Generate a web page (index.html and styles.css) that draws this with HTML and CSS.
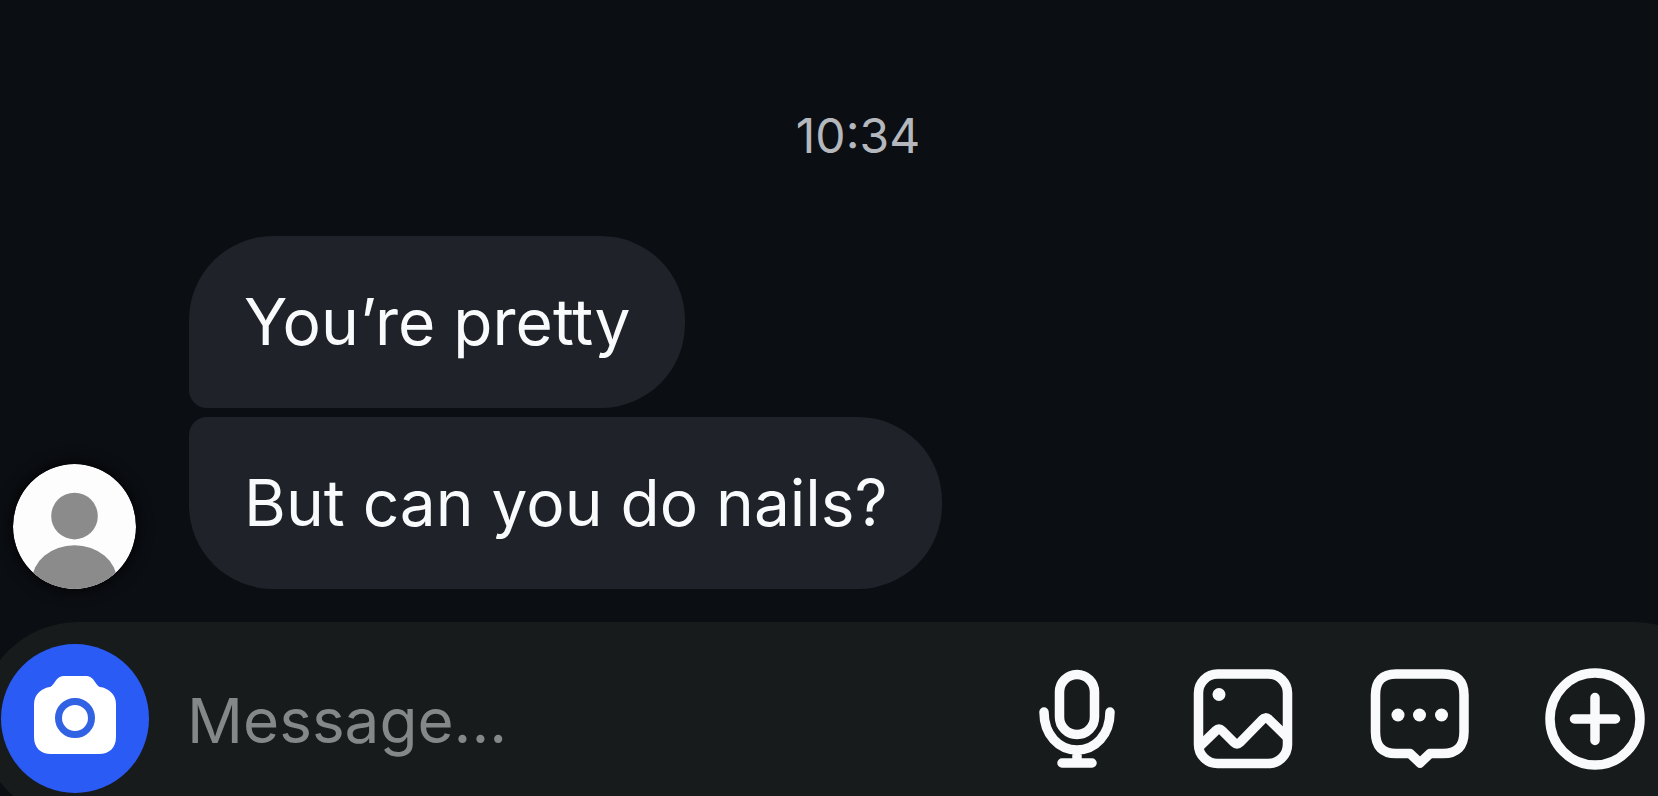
FILE: index.html
```html
<!DOCTYPE html>
<html lang="en">

<head>
    <meta charset="UTF-8">
    <meta name="viewport" content="width=device-width, initial-scale=1.0">
    <title>Chat</title>
    <link rel="stylesheet" href="styles.css">
</head>

<body>
    <main class="chat">
        <time class="time">10:34</time>

        <section class="thread">
            <svg class="avatar" viewBox="0 0 124 126" role="img" aria-label="Profile picture">
                <clipPath id="round">
                    <ellipse cx="62" cy="63" rx="62" ry="63" />
                </clipPath>
                <g clip-path="url(#round)">
                    <rect width="124" height="126" fill="#fdfdfd" />
                    <circle cx="62" cy="52.5" r="23.5" fill="#8b8b8b" />
                    <ellipse cx="62" cy="118" rx="43" ry="36" fill="#8b8b8b" />
                </g>
            </svg>
            <div class="messages">
                <p class="bubble first">You’re pretty</p>
                <p class="bubble last">But can you do nails?</p>
            </div>
        </section>

        <form class="composer">
            <button type="button" class="camera" aria-label="Camera">
                <svg width="82" height="86" viewBox="0 0 82 86">
                    <path d="M31 0H51C61 0 60 8 66 11C74 12 82 18 82 28V61C82 72 75 78 65 78H17C7 78 0 72 0 61V28C0 18 8 12 16 11C22 8 21 0 31 0Z" fill="#fff" />
                    <circle cx="41" cy="42" r="16.5" fill="none" stroke="#3262e4" stroke-width="7" />
                </svg>
            </button>
            <input type="text" class="field" placeholder="Message..." aria-label="Message">
            <div class="actions">
                <button type="button" aria-label="Voice message">
                    <svg width="80" height="102" viewBox="0 0 80 102">
                        <rect x="22.5" y="6.5" width="35" height="60" rx="17.5" />
                        <path d="M7 44C7 67 22 82 40 82S73 67 73 44M40 82V95M25 95H55" />
                    </svg>
                </button>
                <button type="button" aria-label="Photo">
                    <svg width="100" height="102" viewBox="0 0 100 102">
                        <rect x="5.5" y="6" width="89" height="89.5" rx="19" />
                        <path d="M7 78L23 62.5Q26 59.5 29 62.5L41 74.5Q44 77.5 47 74.5L69 52Q72.5 48 76 51.5L94 69" />
                        <circle class="dot" cx="26" cy="26.5" r="6.5" />
                    </svg>
                </button>
                <button type="button" aria-label="Quick replies">
                    <svg width="100" height="102" viewBox="0 0 100 102">
                        <path d="M27 6H74Q95 6 95 27V64Q95 85.5 74 85.5H61L51 95L41 85.5H27Q6.5 85.5 6.5 64V27Q6.5 6 27 6Z" />
                        <circle class="dot" cx="29" cy="47" r="6.5" />
                        <circle class="dot" cx="50.5" cy="47" r="6.5" />
                        <circle class="dot" cx="72.5" cy="47" r="6.5" />
                    </svg>
                </button>
                <button type="button" aria-label="More">
                    <svg width="100" height="102" viewBox="0 0 100 102">
                        <ellipse cx="50" cy="51" rx="45" ry="46" />
                        <path d="M50 29.500V72.500M29.500 51H70.500" />
                    </svg>
                </button>
            </div>
        </form>
    </main>
</body>

</html>
```

FILE: styles.css
```css
* {
    box-sizing: border-box;
}

body {
    margin: 0;
    background-color: #0b0e13;
    color: #f8fafc;
    font-family: Inter, "Liberation Sans", sans-serif;
}

.chat {
    display: flex;
    flex-direction: column;
    height: 100vh;
    overflow: hidden;
}

.time {
    padding: 108px 0 0 58px;
    font-size: 48px;
    line-height: 56px;
    text-align: center;
    color: #b4b7bc;
}

.thread {
    display: flex;
    align-items: flex-end;
    gap: 53px;
    margin-top: auto;
    padding: 0 13px 33px;
}

.avatar {
    flex: none;
    width: 123px;
    height: 125px;
    border-radius: 50%;
    box-shadow: 0 0 16px #000;
}

.messages {
    display: flex;
    flex-direction: column;
    align-items: flex-start;
    gap: 9px;
}

.bubble {
    margin: 0;
    padding: 48px 55px;
    background-color: #1f2228;
    font-size: 64px;
    line-height: 76px;
}

.first {
    border-radius: 84px 84px 84px 18px;
}

.last {
    border-radius: 18px 84px 84px 84px;
}

/* the bar is wider than the screen, its rounded ends run off the edges */
.composer {
    flex: none;
    display: flex;
    align-items: flex-start;
    height: 198px;
    margin: 0 -75px -24px -21px;
    padding: 22px 88px 0 22px;
    border-radius: 99px;
    background-color: #171b1b;
}

button {
    flex: none;
    display: flex;
    padding: 0;
    border: none;
    background: none;
    cursor: pointer;
}

.camera {
    width: 148px;
    height: 149px;
    align-items: center;
    justify-content: center;
    border-radius: 50%;
    background-color: #2b5bf5;
}

.field {
    flex: 1;
    min-width: 0;
    height: 149px;
    padding: 4px 0 0 38px;
    border: none;
    outline: none;
    background: none;
    color: #f8fafc;
    font-family: inherit;
    font-size: 62px;
}

.field::placeholder {
    color: #858889;
    opacity: 1;
}

.actions {
    display: flex;
    align-items: center;
    gap: 76px;
    height: 149px;
}

.actions svg {
    fill: none;
    stroke: #f8fafc;
    stroke-width: 9.5;
    stroke-linecap: round;
    stroke-linejoin: round;
}

.actions .dot {
    fill: #f8fafc;
    stroke: none;
}
```
